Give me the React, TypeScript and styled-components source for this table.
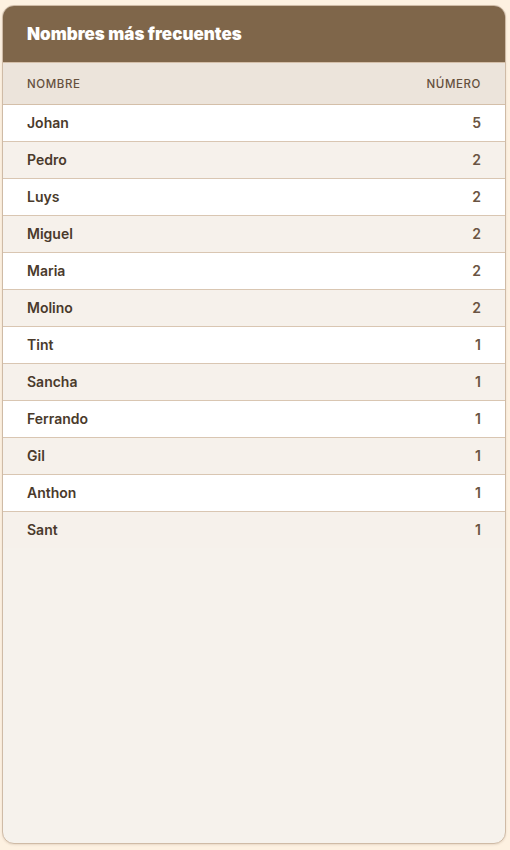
import React from "react";
import styled, { createGlobalStyle } from "styled-components";

const GlobalStyle = createGlobalStyle`
  html, body {
    margin: 0;
    padding: 0;
    background: #fdf1e1;
    font-family: Inter, "Noto Sans", sans-serif;
  }
`;

const Page = styled.div`
  padding: 5px 4px 6px 2px;
`;

const Card = styled.section`
  height: 839px;
  box-sizing: border-box;
  background: #f6f2ec;
  border: 1px solid #cfbba6;
  border-radius: 12px;
  overflow: hidden;
  box-shadow: 0 1px 2px rgba(120, 90, 60, 0.15);
`;

const Header = styled.header`
  height: 56px;
  display: flex;
  align-items: center;
  padding: 0 24px;
  background: #7f664a;
  border-bottom: 1px solid #d4bfa9;
`;

const Title = styled.h2`
  margin: 0;
  color: #ffffff;
  font-size: 17px;
  font-weight: 900;
  letter-spacing: 0;
`;

const Table = styled.table`
  width: 100%;
  border-collapse: collapse;
`;

const HeadCell = styled.th<{ $right?: boolean }>`
  height: 41px;
  padding: 0 24px;
  background: #ece4db;
  border-bottom: 1px solid #d4bfa9;
  text-align: ${({ $right }) => ($right ? "right" : "left")};
  font-size: 11.5px;
  font-weight: 500;
  letter-spacing: 0.6px;
  text-transform: uppercase;
  color: #65503d;
`;

const Row = styled.tr<{ $odd: boolean }>`
  background: ${({ $odd }) => ($odd ? "#f6f1eb" : "#ffffff")};
`;

const Cell = styled.td<{ $right?: boolean; $last?: boolean }>`
  height: 35px;
  padding: 0 24px 1px;
  border-bottom: ${({ $last }) => ($last ? "none" : "1px solid #d9c6b2")};
  text-align: ${({ $right }) => ($right ? "right" : "left")};
  font-size: 14px;
  font-weight: 600;
  color: ${({ $right }) => ($right ? "#6a5442" : "#4a3a2b")};
`;

const names: [string, number][] = [
  ["Johan", 5],
  ["Pedro", 2],
  ["Luys", 2],
  ["Miguel", 2],
  ["Maria", 2],
  ["Molino", 2],
  ["Tint", 1],
  ["Sancha", 1],
  ["Ferrando", 1],
  ["Gil", 1],
  ["Anthon", 1],
  ["Sant", 1],
];

const App: React.FC = () => {
  return (
    <Page>
      <GlobalStyle />
      <Card>
        <Header>
          <Title>Nombres más frecuentes</Title>
        </Header>
        <Table>
          <thead>
            <tr>
              <HeadCell>Nombre</HeadCell>
              <HeadCell $right>Número</HeadCell>
            </tr>
          </thead>
          <tbody>
            {names.map(([name, count], i) => {
              const last = i === names.length - 1;
              return (
                <Row key={name} $odd={i % 2 === 1}>
                  <Cell $last={last}>{name}</Cell>
                  <Cell $right $last={last}>{count}</Cell>
                </Row>
              );
            })}
          </tbody>
        </Table>
      </Card>
    </Page>
  );
};

export default App;
